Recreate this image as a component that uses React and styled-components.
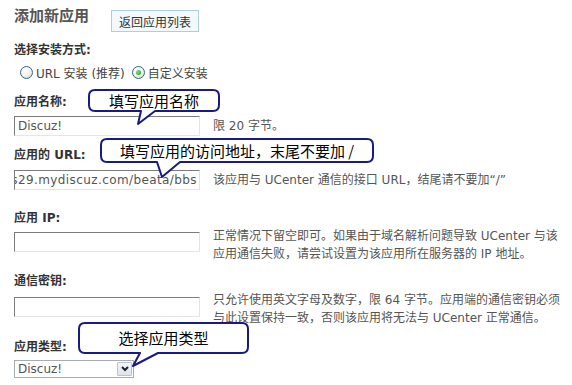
import React from "react";
import styled, { createGlobalStyle } from "styled-components";

const GlobalStyle = createGlobalStyle`
  html, body {
    margin: 0;
    padding: 0;
    background: #ffffff;
  }
  body {
    font-family: "DejaVu Sans", "Noto Sans CJK SC", sans-serif;
    font-size: 12px;
    color: #333;
  }
`;

const Page = styled.div`
  position: relative;
  width: 572px;
  height: 385px;
  box-sizing: border-box;
  padding: 8px 14px 0;
  overflow: hidden;
  display: flex;
  flex-direction: column;
  align-items: flex-start;
`;

const Header = styled.div`
  display: flex;
  align-items: flex-start;
  gap: 22px;
`;

const Title = styled.h3`
  margin: 0;
  font-size: 15px;
  line-height: 16px;
  font-weight: bold;
  color: #555;
`;

const BackButton = styled.button`
  margin-top: 2px;
  height: 22px;
  padding: 0 7px;
  border: 1px solid #a9cfe0;
  background: #f2f8fb;
  font-family: "DejaVu Sans", "Noto Sans CJK SC", sans-serif;
  font-size: 12px;
  color: #333;
`;

const Label = styled.div`
  margin-top: ${(p) => p.$top}px;
  font-weight: bold;
  line-height: 16px;
  color: #333;
`;

const RadioRow = styled.div`
  margin-top: ${(p) => p.$top}px;
  padding-left: 6px;
  height: 16px;
  display: flex;
  align-items: center;
  color: #444;
`;

const RadioOption = styled.label`
  display: flex;
  align-items: center;
  gap: 3px;
  margin-right: 7px;
`;

const RadioCircle = styled.span`
  width: 13px;
  height: 13px;
  box-sizing: border-box;
  border-radius: 50%;
  border: 1px solid #3a6488;
  background: radial-gradient(circle at 35% 30%, #ffffff 0%, #f3f3ef 45%, #d6d6d0 100%);
  display: flex;
  align-items: center;
  justify-content: center;
  &::after {
    content: "";
    width: 5px;
    height: 5px;
    border-radius: 50%;
    background: ${(p) => (p.$checked ? "radial-gradient(circle at 35% 35%, #7fe07f, #1f9a1f)" : "transparent")};
  }
`;

const Row = styled.div`
  margin-top: ${(p) => p.$top}px;
  display: grid;
  grid-template-columns: 186px auto;
  column-gap: 13px;
  align-items: ${(p) => p.$align || "center"};
`;

const TextBox = styled.div`
  margin-top: ${(p) => p.$offset || 0}px;
  width: 186px;
  height: 20px;
  box-sizing: border-box;
  border: 1px solid;
  border-color: #7c7c7c #e4e4e4 #e4e4e4 #7c7c7c;
  background: #fff;
  padding: ${(p) => (p.$scrolled ? "0 2px 0 0" : "0 3px")};
  overflow: hidden;
  white-space: nowrap;
  display: flex;
  align-items: center;
  justify-content: ${(p) => (p.$scrolled ? "flex-end" : "flex-start")};
  letter-spacing: ${(p) => (p.$scrolled ? "0.4px" : "0")};
  color: #555;
  line-height: 18px;
`;

const Desc = styled.div`
  line-height: 18px;
  color: #555;
  white-space: nowrap;
`;

const Select = styled.div`
  margin-top: ${(p) => p.$top}px;
  width: 120px;
  height: 18px;
  box-sizing: border-box;
  border: 1px solid #a5acb2;
  display: flex;
  align-items: center;
  justify-content: space-between;
  padding-left: 3px;
  color: #555;
`;

const SelectArrow = styled.span`
  width: 15px;
  height: 14px;
  margin-right: 1px;
  box-sizing: border-box;
  border: 1px solid #b8c4d6;
  border-radius: 1px;
  background: linear-gradient(#f4f6fa, #dde3ee);
  display: flex;
  align-items: center;
  justify-content: center;
`;

const CalloutBox = styled.div`
  position: absolute;
  left: ${(p) => p.$x}px;
  top: ${(p) => p.$y}px;
  width: ${(p) => p.$w}px;
  height: ${(p) => p.$h}px;
  display: flex;
  align-items: center;
  justify-content: center;
  z-index: 2;
`;

const CalloutShape = styled.svg`
  position: absolute;
  left: 0;
  top: 0;
  overflow: visible;
`;

const CalloutText = styled.span`
  position: relative;
  font-family: "Noto Sans CJK SC", sans-serif;
  font-size: 15px;
  font-weight: 400;
  line-height: 18px;
  color: #000;
`;

function bubblePath(w, h, r, tail) {
  const [b1, b2, tx, ty] = tail;
  const a = 1;
  const W = w - 1;
  const H = h - 1;
  return [
    `M${a + r},${a}`,
    `L${W - r},${a}`,
    `Q${W},${a} ${W},${a + r}`,
    `L${W},${H - r}`,
    `Q${W},${H} ${W - r},${H}`,
    `L${b2},${H}`,
    `L${tx},${ty}`,
    `L${b1},${H}`,
    `L${a + r},${H}`,
    `Q${a},${H} ${a},${H - r}`,
    `L${a},${a + r}`,
    `Q${a},${a} ${a + r},${a}`,
    "Z",
  ].join(" ");
}

function Callout({ x, y, w, h, tail, children }) {
  return (
    <CalloutBox $x={x} $y={y} $w={w} $h={h}>
      <CalloutShape width={w} height={tail[3]}>
        <path d={bubblePath(w, h, 6, tail)} fill="#fff" stroke="#1a1a86" strokeWidth="2" strokeLinejoin="round" />
      </CalloutShape>
      <CalloutText>{children}</CalloutText>
    </CalloutBox>
  );
}

function Radio({ checked, children }) {
  return (
    <RadioOption>
      <RadioCircle $checked={checked} />
      {children}
    </RadioOption>
  );
}

export default function App() {
  return (
    <>
      <GlobalStyle />
      <Page>
        <Header>
          <Title>添加新应用</Title>
          <BackButton>返回应用列表</BackButton>
        </Header>

        <Label $top={10}>选择安装方式:</Label>
        <RadioRow $top={6}>
          <Radio>URL 安装 (推荐)</Radio>
          <Radio checked>自定义安装</Radio>
        </RadioRow>

        <Label $top={14}>应用名称:</Label>
        <Row $top={6}>
          <TextBox>Discuz!</TextBox>
          <Desc>限 20 字节。</Desc>
        </Row>

        <Label $top={11}>应用的 URL:</Label>
        <Row $top={7}>
          <TextBox $scrolled>http://s29.mydiscuz.com/beata/bbs</TextBox>
          <Desc>该应用与 UCenter 通信的接口 URL，结尾请不要加“/”</Desc>
        </Row>

        <Label $top={20}>应用 IP:</Label>
        <Row $top={1} $align="start">
          <TextBox $offset={5} />
          <Desc>
            正常情况下留空即可。如果由于域名解析问题导致 UCenter 与该
            <br />
            应用通信失败，请尝试设置为该应用所在服务器的 IP 地址。
          </Desc>
        </Row>

        <Label $top={10}>通信密钥:</Label>
        <Row $top={2} $align="start">
          <TextBox $offset={6} />
          <Desc>
            只允许使用英文字母及数字，限 64 字节。应用端的通信密钥必须
            <br />
            与此设置保持一致，否则该应用将无法与 UCenter 正常通信。
          </Desc>
        </Row>

        <Label $top={12}>应用类型:</Label>
        <Select $top={5}>
          Discuz!
          <SelectArrow>
            <svg width="8" height="6" viewBox="0 0 8 6">
              <polyline points="1,1 4,4 7,1" fill="none" stroke="#222" strokeWidth="2" />
            </svg>
          </SelectArrow>
        </Select>

        <Callout x={88} y={89} w={132} h={23} tail={[53, 67, 50, 35]}>
          填写应用名称
        </Callout>
        <Callout x={100} y={138} w={274} h={25} tail={[57, 80, 62, 39]}>
          填写应用的访问地址，末尾不要加 /
        </Callout>
        <Callout x={78} y={322} w={171} h={32} tail={[62, 80, 55, 44]}>
          选择应用类型
        </Callout>
      </Page>
    </>
  );
}
